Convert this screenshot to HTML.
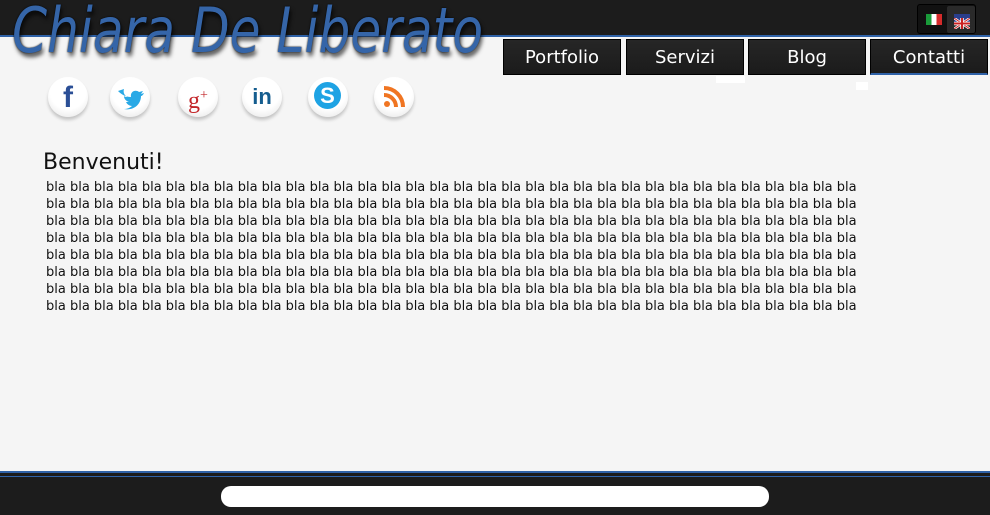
<!DOCTYPE html>
<html><head><meta charset="utf-8"><style>
*{margin:0;padding:0;box-sizing:border-box}
body{width:990px;height:515px;background:#f5f5f5;position:relative;overflow:hidden;font-family:"DejaVu Sans",sans-serif}
.hdr{position:absolute;left:0;top:0;width:990px;height:37px;background:#1c1c1c;border-bottom:2px solid #2f62a8}
.logo{position:absolute;left:12px;top:-6px;font-family:"DejaVu Sans",sans-serif;font-style:italic;font-weight:normal;font-size:62px;color:#3565a8;text-shadow:0 0 2px #000,2px 4px 5px rgba(0,0,0,.7);white-space:nowrap;transform:scaleX(0.81);transform-origin:left top}
.flags{position:absolute;left:917px;top:4px;width:59px;height:30px;background:#111;border:1px solid #000;border-radius:3px}
.flags .b{position:absolute;left:29px;top:1px;width:28px;height:27px;background:#2a2a2a;border-radius:2px}
.it{position:absolute;left:8px;top:9px;width:16px;height:11px;background:linear-gradient(90deg,#1a9b3a 33%,#fff 33% 66%,#d52b2b 66%)}
.uk{position:absolute;left:36px;top:9px;width:16px;height:11px;background:#2a3e8c}
.nav{position:absolute;top:39px;height:36px;background:linear-gradient(#262626,#1b1b1b);border:1px solid #000;color:#fff;font-size:18px;text-align:center;line-height:36px}
.soc{position:absolute;top:77px;width:40px;height:40px;border-radius:50%;background:radial-gradient(circle at 50% 35%,#fff 55%,#e2e2e2);box-shadow:0 3px 3px rgba(0,0,0,.2);text-align:center;font-weight:bold;font-family:"Liberation Sans",sans-serif}
h1{position:absolute;left:43px;top:150px;font-size:22px;font-weight:normal;color:#111}
.txt{position:absolute;left:46px;top:179px;width:830px;font-size:13px;line-height:17px;color:#111}
.ftr{position:absolute;left:0;top:471px;width:990px;height:44px;background:#1c1c1c;border-top:2px solid #2f62a8}
.ftr:before{content:"";position:absolute;left:0;top:3px;width:990px;height:1px;background:#2f62a8}
.pill{position:absolute;left:221px;top:486px;width:548px;height:21px;background:#fff;border-radius:10px}
</style></head><body>
<div class="hdr"></div>
<div class="logo">Chiara De Liberato</div>
<div class="flags"><div class="it"></div><div class="b"></div><div class="uk"><svg width="16" height="11"><path d="M0 0L16 11M16 0L0 11" stroke="#fff" stroke-width="2.5"/><path d="M0 0L16 11M16 0L0 11" stroke="#c22" stroke-width="1"/><path d="M8 0V11M0 5.5H16" stroke="#fff" stroke-width="3.5"/><path d="M8 0V11M0 5.5H16" stroke="#c22" stroke-width="2"/></svg></div></div>
<div class="nav" style="left:503px;width:118px">Portfolio</div>
<div class="nav" style="left:626px;width:118px">Servizi</div>
<div class="nav" style="left:748px;width:118px">Blog</div>
<div class="nav" style="left:870px;width:118px;border-bottom:2px solid #2f62a8">Contatti</div>
<div style="position:absolute;left:716px;top:76px;width:29px;height:7px;background:#fff"></div>
<div style="position:absolute;left:856px;top:82px;width:12px;height:8px;background:#fff"></div>
<div class="soc" style="left:48px;color:#2b4f96;font-size:30px;line-height:42px">f</div>
<div class="soc" style="left:110px"><svg width="40" height="40" viewBox="0 0 40 40"><path d="M8 14c4 4 8 6 13 6-1-5 4-8 8-5l4-1-2 3 3-1c-1 2-2 3-3 3 0 8-7 15-17 13 3 0 6-1 8-3-3 0-5-2-6-4h3c-3-1-5-3-5-6 1 1 2 1 3 1-3-2-4-5-3-8z" fill="#29a9e6"/></svg></div>
<div class="soc" style="left:178px;color:#c3262a;font-family:'Liberation Serif',serif;font-weight:normal;font-size:24px;line-height:38px">g<sup style="font-size:14px">+</sup></div>
<div class="soc" style="left:242px;color:#155d8f;font-size:22px;line-height:40px">in</div>
<div class="soc" style="left:308px"><div style="position:absolute;left:6px;top:5px;width:27px;height:27px;border-radius:50%;background:#1ea3e4;color:#fff;font-size:22px;line-height:27px">S</div></div>
<div class="soc" style="left:374px"><svg width="40" height="40" viewBox="0 0 40 40"><circle cx="13" cy="27" r="3" fill="#f07522"/><path d="M10 18a12 12 0 0 1 12 12" stroke="#f07522" stroke-width="4" fill="none"/><path d="M10 11a19 19 0 0 1 19 19" stroke="#f07522" stroke-width="4" fill="none"/></svg></div>
<h1>Benvenuti!</h1>
<div class="txt">bla bla bla bla bla bla bla bla bla bla bla bla bla bla bla bla bla bla bla bla bla bla bla bla bla bla bla bla bla bla bla bla bla bla bla bla bla bla bla bla bla bla bla bla bla bla bla bla bla bla bla bla bla bla bla bla bla bla bla bla bla bla bla bla bla bla bla bla bla bla bla bla bla bla bla bla bla bla bla bla bla bla bla bla bla bla bla bla bla bla bla bla bla bla bla bla bla bla bla bla bla bla bla bla bla bla bla bla bla bla bla bla bla bla bla bla bla bla bla bla bla bla bla bla bla bla bla bla bla bla bla bla bla bla bla bla bla bla bla bla bla bla bla bla bla bla bla bla bla bla bla bla bla bla bla bla bla bla bla bla bla bla bla bla bla bla bla bla bla bla bla bla bla bla bla bla bla bla bla bla bla bla bla bla bla bla bla bla bla bla bla bla bla bla bla bla bla bla bla bla bla bla bla bla bla bla bla bla bla bla bla bla bla bla bla bla bla bla bla bla bla bla bla bla bla bla bla bla bla bla bla bla bla bla bla bla bla bla bla bla bla bla bla bla bla bla bla bla bla bla bla bla bla bla bla bla bla bla bla bla bla bla bla bla bla bla bla bla bla bla bla bla</div>
<div class="ftr"></div>
<div class="pill"></div>
</body></html>
